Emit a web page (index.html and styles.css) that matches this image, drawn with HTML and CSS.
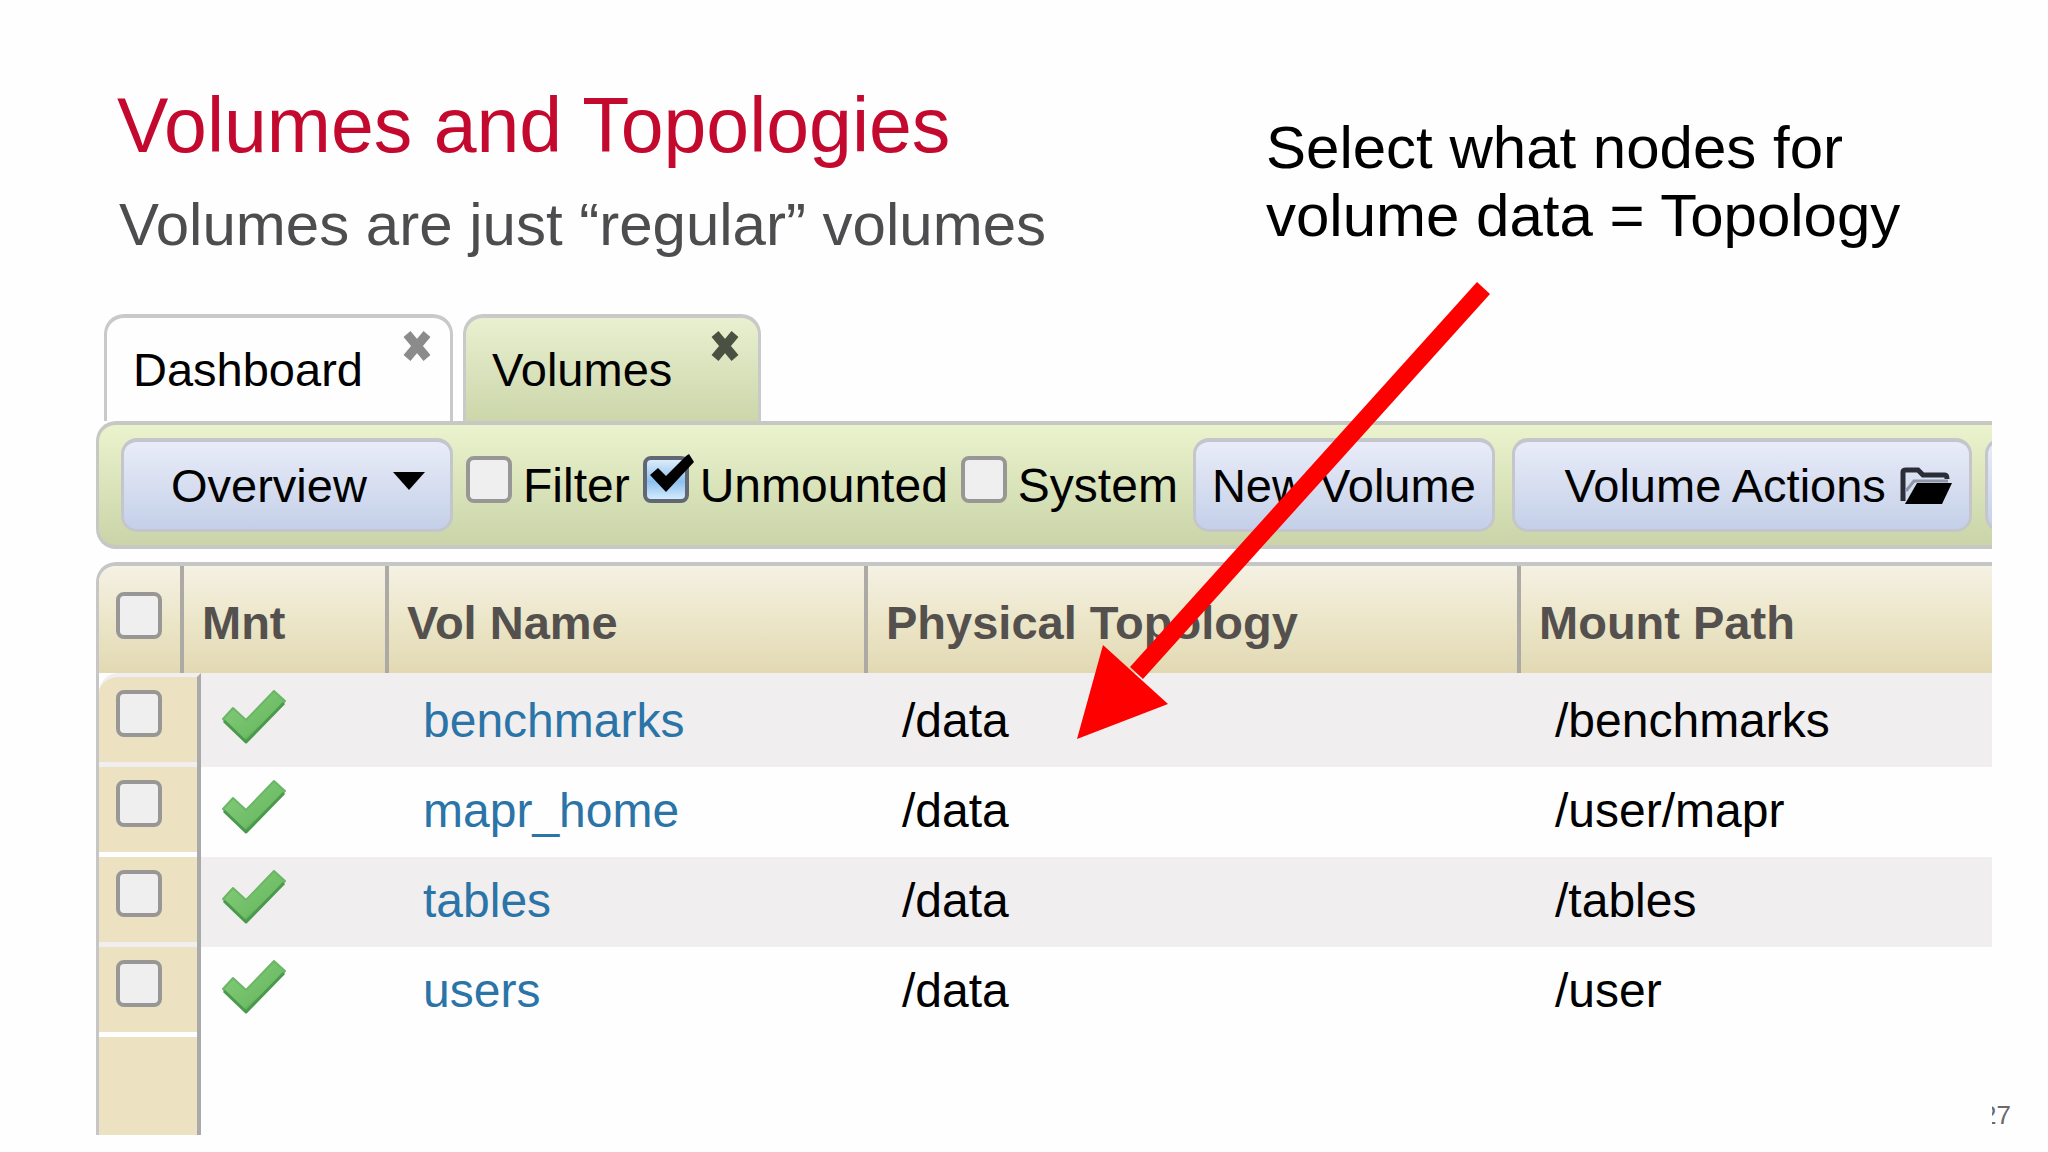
FILE: index.html
```html
<!DOCTYPE html>
<html lang="en">
<head>
<meta charset="utf-8">
<title>Volumes and Topologies</title>
<link rel="stylesheet" href="styles.css">
</head>
<body>
<svg class="defs" aria-hidden="true">
  <defs>
    <linearGradient id="green" x1="0" y1="0" x2="1" y2="1">
      <stop offset="0.3" stop-color="#7cc672"/>
      <stop offset="0.62" stop-color="#6fbd66"/>
      <stop offset="0.75" stop-color="#3f9443"/>
    </linearGradient>
    <symbol id="check" viewBox="0 0 66 54">
      <path d="M2 29 L12 18 L25 30 L53 1 L64 11 L25 52 Z" fill="url(#green)" stroke="#6cb667" stroke-width="2" stroke-linejoin="round"/>
      <path d="M63 13 L25 52 L3 31" fill="none" stroke="#4a994c" stroke-width="3" stroke-linejoin="round"/>
    </symbol>
    <symbol id="close" viewBox="0 0 32 32">
      <path d="M6 4 L26 28 M26 4 L6 28" stroke="currentColor" stroke-width="9" fill="none"/>
    </symbol>
  </defs>
</svg>
<main class="slide">
  <header class="heading">
    <div class="titles">
      <h1>Volumes and Topologies</h1>
      <p class="subtitle">Volumes are just “regular” volumes</p>
    </div>
    <p class="callout">Select what nodes for<br>volume data = Topology</p>
  </header>

  <section class="console">
    <nav class="tabs">
      <div class="tab">
        <a href="#dashboard">Dashboard</a>
        <button class="close" type="button" aria-label="Close Dashboard"><svg><use href="#close"/></svg></button>
      </div>
      <div class="tab active">
        <a href="#volumes">Volumes</a>
        <button class="close" type="button" aria-label="Close Volumes"><svg><use href="#close"/></svg></button>
      </div>
    </nav>

    <div class="toolbar">
      <div class="picker">
        <select class="control" aria-label="View"><option>Overview</option></select>
        <svg class="caret" viewBox="0 0 32 18" aria-hidden="true"><path d="M0 0H32L16 18Z"/></svg>
      </div>
      <label class="option"><span class="box"><input type="checkbox"></span>Filter</label>
      <label class="option"><span class="box"><input type="checkbox" checked><svg class="tick" viewBox="0 0 46 40" aria-hidden="true"><path d="M1 21 L9 14 L17 22 L37 2 L40 0 L45 8 L17 38 Z"/></svg></span>Unmounted</label>
      <label class="option"><span class="box"><input type="checkbox"></span>System</label>
      <button class="control new" type="button">New Volume</button>
      <button class="control actions" type="button">Volume Actions
        <svg class="folder" viewBox="0 0 52 38" aria-hidden="true">
          <path d="M3 34 V5 Q3 3 6 3 H18 L23 8 H45 Q47 8 47 12" fill="none" stroke="#2b2e38" stroke-width="5"/>
          <path d="M6 24 L14 14 H48" fill="none" stroke="#8f96a8" stroke-width="3"/>
          <path d="M17 16 H52 L42 37 H5 Z"/>
        </svg>
      </button>
      <button class="control more" type="button" aria-label="More"></button>
    </div>

    <table class="grid">
      <colgroup>
        <col class="c-pick"><col class="c-edge"><col class="c-mnt"><col class="c-name"><col class="c-topo"><col>
      </colgroup>
      <thead>
        <tr>
          <th class="pick"><input type="checkbox" aria-label="Select all"></th>
          <th colspan="2">Mnt</th>
          <th>Vol Name</th>
          <th>Physical Topology</th>
          <th>Mount Path</th>
        </tr>
      </thead>
      <tbody>
        <tr>
          <td class="gutter" colspan="2"><input type="checkbox" aria-label="Select benchmarks"></td>
          <td class="mnt"><svg role="img" aria-label="Mounted"><use href="#check"/></svg></td>
          <td><a href="#benchmarks">benchmarks</a></td><td>/data</td><td>/benchmarks</td>
        </tr>
        <tr>
          <td class="gutter" colspan="2"><input type="checkbox" aria-label="Select mapr_home"></td>
          <td class="mnt"><svg role="img" aria-label="Mounted"><use href="#check"/></svg></td>
          <td><a href="#mapr_home">mapr_home</a></td><td>/data</td><td>/user/mapr</td>
        </tr>
        <tr>
          <td class="gutter" colspan="2"><input type="checkbox" aria-label="Select tables"></td>
          <td class="mnt"><svg role="img" aria-label="Mounted"><use href="#check"/></svg></td>
          <td><a href="#tables">tables</a></td><td>/data</td><td>/tables</td>
        </tr>
        <tr>
          <td class="gutter" colspan="2"><input type="checkbox" aria-label="Select users"></td>
          <td class="mnt"><svg role="img" aria-label="Mounted"><use href="#check"/></svg></td>
          <td><a href="#users">users</a></td><td>/data</td><td>/user</td>
        </tr>
        <tr class="rest">
          <td class="gutter" colspan="2"></td><td colspan="4"></td>
        </tr>
      </tbody>
    </table>
  </section>

  <svg class="arrow" viewBox="0 0 416 460" aria-hidden="true">
    <path d="M402 2 L415 14 L68 399 L55 387 Z"/>
    <path d="M28 365 L93 424 L2 459 Z"/>
  </svg>
  <footer class="page-number">27</footer>
</main>
</body>
</html>
```

FILE: styles.css
```css
* { box-sizing: border-box; }

body {
  margin: 0;
  background: #fefefe;
  color: #000;
  font-family: "Liberation Sans", Arial, Helvetica, sans-serif;
}

h1, p { margin: 0; font-weight: 400; }
a { color: inherit; text-decoration: none; }
svg { display: block; }
.defs { position: absolute; width: 0; height: 0; }

.slide {
  position: relative;
  min-height: 100vh;
  padding: 81px 56px 17px 96px;
}

/* Slide heading */
.heading {
  display: flex;
  gap: 32px;
  min-height: 233px;
  padding-left: 21px;
}
.titles { width: 1117px; }
h1 { color: #c4092f; font-size: 77px; line-height: 88px; }
.subtitle { margin-top: 22px; padding-left: 2px; color: #4d4d4f; font-size: 60px; line-height: 68px; }
.callout { padding-top: 33px; font-size: 60px; line-height: 68px; white-space: nowrap; }

/* Console capture */
.console {
  position: relative;
  z-index: 1;
  overflow: hidden;
  background: #fefefe;
  font-size: 48px;
}

.tabs { display: flex; gap: 10px; padding-left: 8px; }
.tab {
  display: flex;
  justify-content: space-between;
  width: 349px;
  height: 107px;
  padding: 0 17px 0 26px;
  border: solid #c9c9c9;
  border-width: 4px 3px 0;
  border-radius: 20px 20px 0 0;
  font-size: 47px;
  line-height: 104px;
}
.tab.active { width: 298px; background: linear-gradient(#e8f0d0, #ccd6aa); }
.close {
  width: 32px;
  height: 32px;
  margin-top: 12px;
  padding: 0;
  border: 0;
  background: none;
  color: #8b8b8b;
}
.close svg { width: 32px; height: 32px; }
.active .close { color: #4a5142; }

.toolbar {
  display: flex;
  align-items: center;
  gap: 13px;
  height: 128px;
  padding-left: 22px;
  border: solid #c6c8c4;
  border-width: 4px 0 4px 3px;
  border-radius: 20px 0 0 20px;
  background: linear-gradient(#eaf3cd, #cad4a8);
}
.toolbar > * { flex: none; }
.control {
  height: 94px;
  margin: 0;
  border: solid #c4c6cc;
  border-width: 4px 3px 3px;
  border-radius: 16px;
  background: linear-gradient(#e9ecf8, #c4d0e8);
  color: #000;
  font: 47px "Liberation Sans", Arial, Helvetica, sans-serif;
  white-space: nowrap;
}
.picker { display: grid; width: 332px; align-items: center; }
.picker > * { grid-area: 1 / 1; }
select.control { appearance: none; width: 100%; padding: 0 0 0 47px; }
.caret { justify-self: end; width: 32px; height: 18px; margin-right: 28px; margin-bottom: 8px; pointer-events: none; }
.new { width: 302px; padding: 0; margin-left: 2px; }
.actions {
  display: flex;
  align-items: center;
  justify-content: flex-end;
  gap: 14px;
  width: 460px;
  margin-left: 4px;
  padding: 0 17px 0 0;
}
.folder { width: 52px; height: 38px; }
.more { width: 80px; }

.option { display: flex; align-items: center; gap: 11px; }
.box { position: relative; margin-bottom: 12px; }
.tick { position: absolute; top: -2px; left: 6px; width: 46px; height: 40px; pointer-events: none; }

input[type="checkbox"] {
  display: block;
  appearance: none;
  width: 46px;
  height: 47px;
  margin: 0;
  border: 4px solid #999795;
  border-radius: 8px;
  background: #efefef;
}
input[type="checkbox"]:checked {
  border-color: #626873;
  background: linear-gradient(#dcecfb, #8dc0ee 55%, #d3ecfd);
}

/* Volume table */
.grid {
  width: 100%;
  margin-top: 13px;
  border: solid #c6c6c6;
  border-width: 4px 0 0 3px;
  border-radius: 20px 0 0 0;
  border-spacing: 0;
  table-layout: fixed;
  overflow: hidden;
}
.c-pick { width: 85px; }
.c-edge { width: 17px; }
.c-mnt { width: 188px; }
.c-name { width: 479px; }
.c-topo { width: 653px; }

thead tr { background: linear-gradient(#f5f1e4, #ece6c9 50%, #e2d9b3); }
th {
  height: 107px;
  padding: 6px 0 0 18px;
  border-right: 4px solid #adaaa6;
  color: #54504e;
  font-size: 47px;
  line-height: 101px;
  text-align: left;
  vertical-align: top;
}
th:last-child { border-right: 0; }
th.pick { padding: 26px 0 0 17px; }

td { height: 90px; padding: 0 0 0 34px; line-height: 88px; vertical-align: top; }
td a { color: #2b74a8; }
tbody tr:nth-child(odd) { background: #f0eeef; }
tbody tr:first-child td { height: 94px; border-top: 4px solid #f0eeef; }
td.gutter {
  padding: 13px 0 0 17px;
  border-right: 4px solid #aaa;
  background: linear-gradient(#fefefe, #fefefe) bottom / 100% 5px no-repeat #ece2c1;
}
tbody tr:nth-child(odd) .gutter { background-image: linear-gradient(#f0eeef, #f0eeef); }
tbody tr:first-child .gutter { border-top-left-radius: 20px; }
td.mnt { padding: 13px 0 0 20px; }
.mnt svg { width: 66px; height: 54px; }
tbody tr.rest { background: none; }
tbody tr.rest td { height: 98px; }
tbody tr.rest .gutter { background: #ece2c1; }

/* Annotation over the capture */
.arrow { position: absolute; z-index: 2; top: 280px; left: 1075px; width: 416px; height: 460px; fill: #f00; pointer-events: none; }

.page-number { position: absolute; right: 37px; bottom: 22px; color: #6a6a6c; font-size: 26px; line-height: 30px; }
```
